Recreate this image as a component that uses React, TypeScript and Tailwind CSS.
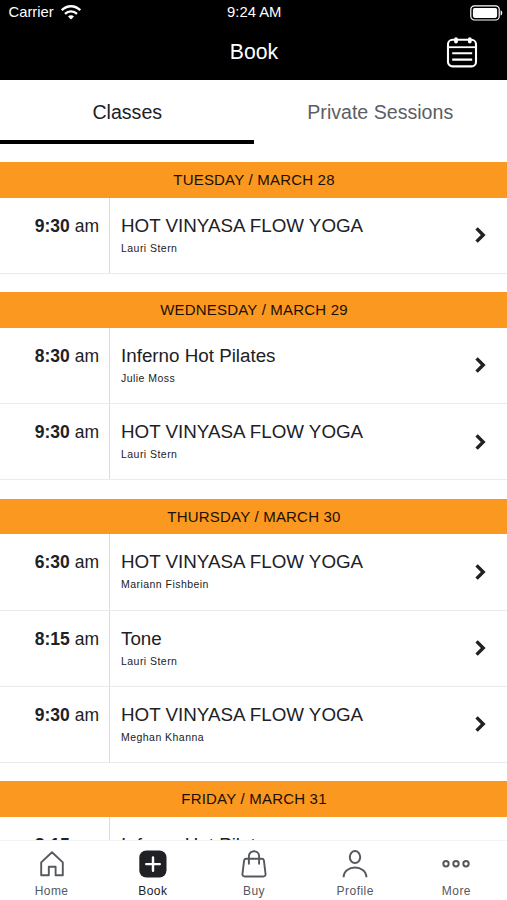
import React from "react";

type ClassItem = { time: string; title: string; teacher: string };
type Day = { label: string; classes: ClassItem[] };

const days: Day[] = [
  {
    label: "TUESDAY / MARCH 28",
    classes: [{ time: "9:30", title: "HOT VINYASA FLOW YOGA", teacher: "Lauri Stern" }],
  },
  {
    label: "WEDNESDAY / MARCH 29",
    classes: [
      { time: "8:30", title: "Inferno Hot Pilates", teacher: "Julie Moss" },
      { time: "9:30", title: "HOT VINYASA FLOW YOGA", teacher: "Lauri Stern" },
    ],
  },
  {
    label: "THURSDAY / MARCH 30",
    classes: [
      { time: "6:30", title: "HOT VINYASA FLOW YOGA", teacher: "Mariann Fishbein" },
      { time: "8:15", title: "Tone", teacher: "Lauri Stern" },
      { time: "9:30", title: "HOT VINYASA FLOW YOGA", teacher: "Meghan Khanna" },
    ],
  },
  {
    label: "FRIDAY / MARCH 31",
    classes: [{ time: "8:15", title: "Inferno Hot Pilates", teacher: "Julie Moss" }],
  },
];

const WifiIcon = () => (
  <svg width="20" height="15" viewBox="0 0 20 15" fill="none" stroke="white" strokeWidth="2.3">
    <path d="M0.8 5.2C6 -0.1 14 -0.1 19.2 5.2" />
    <path d="M4 8.8C7.4 5.5 12.6 5.5 16 8.8" />
    <path d="M10 14.4L7 11.4C8.7 9.8 11.3 9.8 13 11.4Z" fill="white" stroke="none" />
  </svg>
);

const BatteryIcon = () => (
  <svg width="33" height="16" viewBox="0 0 33 16" fill="none">
    <rect x="0.8" y="0.8" width="28.4" height="14.2" rx="3.6" stroke="white" strokeWidth="1.2" />
    <rect x="2.9" y="2.9" width="24.2" height="10" rx="1.8" fill="white" />
    <path d="M30.6 5.2C32.8 6 32.8 9.8 30.6 10.6Z" fill="white" />
  </svg>
);

const CalendarIcon = () => (
  <svg width="32" height="32" viewBox="0 0 32 32" fill="none" stroke="white" strokeWidth="2.1">
    <rect x="2" y="3.8" width="28" height="26.6" rx="4.5" />
    <path d="M2 11.2H30" strokeWidth="1.8" />
    <path d="M10 3.2V5.6M23.8 3.2V5.6" strokeWidth="3.8" strokeLinecap="round" />
    <path d="M6.2 17.3H26.2M6.2 23.6H26.2" />
  </svg>
);

const HomeIcon = () => (
  <svg width="28" height="28" viewBox="0 0 28 28" fill="none" stroke="#55585d" strokeWidth="1.9" strokeLinejoin="round">
    <path d="M3.2 12.4L14 2.2L24.8 12.4V25.3H17.6V16.8H10.8V25.3H3.2Z" />
  </svg>
);

const BookIcon = () => (
  <svg width="28" height="28" viewBox="0 0 28 28" fill="none">
    <rect x="0.3" y="0.4" width="27.2" height="27.2" rx="7" fill="#202125" />
    <path d="M14 7.4V20.8M7.2 14.1H20.8" stroke="white" strokeWidth="2.4" strokeLinecap="round" />
  </svg>
);

const BagIcon = () => (
  <svg width="28" height="28" viewBox="0 0 28 28" fill="none" stroke="#55585d" strokeWidth="1.9" strokeLinecap="round" strokeLinejoin="round">
    <path d="M6.2 8.7H21.8Q23.6 8.7 23.9 10.4L25.5 23.6Q25.9 26.5 23.2 26.5H4.8Q2.1 26.5 2.5 23.6L4.1 10.4Q4.4 8.7 6.2 8.7Z" />
    <path d="M8.9 13.8V6.5C8.9 -0.5 19.1 -0.5 19.1 6.5V13.8" />
  </svg>
);

const ProfileIcon = () => (
  <svg width="28" height="28" viewBox="0 0 28 28" fill="none" stroke="#55585d" strokeWidth="2">
    <ellipse cx="14" cy="7.1" rx="5.2" ry="6" />
    <path d="M2.6 27.2C3 14.4 25 14.4 25.4 27.2" />
  </svg>
);

const MoreIcon = () => (
  <svg width="28" height="28" viewBox="0 0 28 28" fill="none" stroke="#55585d" strokeWidth="2">
    <circle cx="4" cy="13.8" r="2.7" />
    <circle cx="14" cy="13.8" r="2.7" />
    <circle cx="24" cy="13.8" r="2.7" />
  </svg>
);

const navItems = [
  { label: "Home", icon: <HomeIcon /> },
  { label: "Book", icon: <BookIcon />, active: true },
  { label: "Buy", icon: <BagIcon /> },
  { label: "Profile", icon: <ProfileIcon /> },
  { label: "More", icon: <MoreIcon /> },
];

const ClassRow: React.FC<{ item: ClassItem }> = ({ item }) => (
  <div className="flex h-[76.2px] shrink-0 border-b border-[#ebebed]">
    <div className="w-[110px] shrink-0 border-r border-[#dcdcdf] pt-4 pr-[10px] text-right text-[17.5px] leading-6">
      <span className="font-bold">{item.time}</span> am
    </div>
    <div className="flex-1 pt-4 pl-[11px]">
      <p className="text-[18.8px] leading-6 whitespace-nowrap">{item.title}</p>
      <p className="mt-[3px] text-[10.5px] leading-[14px] tracking-[0.46px]">{item.teacher}</p>
    </div>
    <div className="flex items-center pr-[21px]">
      <svg width="12" height="18" viewBox="0 0 12 18" fill="none" stroke="#202125" strokeWidth="3.4">
        <path d="M2.6 2.4L9.2 9L2.6 15.6" />
      </svg>
    </div>
  </div>
);

const App: React.FC = () => (
  <div className="flex h-[900px] w-full flex-col overflow-hidden bg-white font-['Liberation_Sans',Arial,sans-serif] text-[#202125]">
    <header className="h-20 shrink-0 bg-black text-white">
      <div className="grid h-[25px] grid-cols-3 items-center pr-[4px] pl-[8.5px] text-[14.8px]">
        <div className="flex items-center gap-[7px]">
          <span>Carrier</span>
          <WifiIcon />
        </div>
        <span className="pr-[3px] text-center">9:24 AM</span>
        <div className="flex justify-end">
          <BatteryIcon />
        </div>
      </div>
      <div className="grid h-[54px] grid-cols-3 items-center px-[29px]">
        <h1 className="col-start-2 pl-[1px] text-center text-[21.2px]">Book</h1>
        <div className="flex justify-end">
          <CalendarIcon />
        </div>
      </div>
    </header>

    {/* Tabs */}
    <div className="grid h-16 shrink-0 grid-cols-2 text-center text-[19.6px]">
      <button className="flex items-center justify-center border-b-4 border-black pt-[6px] pl-[1px]">Classes</button>
      <button className="flex items-center justify-center border-b-4 border-transparent pt-[6px] text-[#5c5e63]">
        Private Sessions
      </button>
    </div>

    {/* Schedule */}
    <main className="flex min-h-0 flex-1 flex-col gap-[18.5px] overflow-hidden pt-[18px]">
      {days.map((day) => (
        <section key={day.label} className="shrink-0">
          <h2 className="h-[35.6px] bg-[#fa9820] pl-px text-center text-[15px] leading-[36px] tracking-[0.2px] text-[#1b1005]">
            {day.label}
          </h2>
          {day.classes.map((item) => (
            <ClassRow key={item.time} item={item} />
          ))}
        </section>
      ))}
    </main>

    <nav className="grid h-[60px] shrink-0 grid-cols-5 border-t border-[#f3f3f4] bg-white pt-[9px] pl-px">
      {navItems.map((item) => (
        <button
          key={item.label}
          className={`flex flex-col items-center text-[12px] tracking-[0.45px] ${item.active ? "text-[#202125]" : "text-[#55585d]"}`}
        >
          {item.icon}
          <span className="mt-[5px] leading-[16px]">{item.label}</span>
        </button>
      ))}
    </nav>
  </div>
);

export default App;
